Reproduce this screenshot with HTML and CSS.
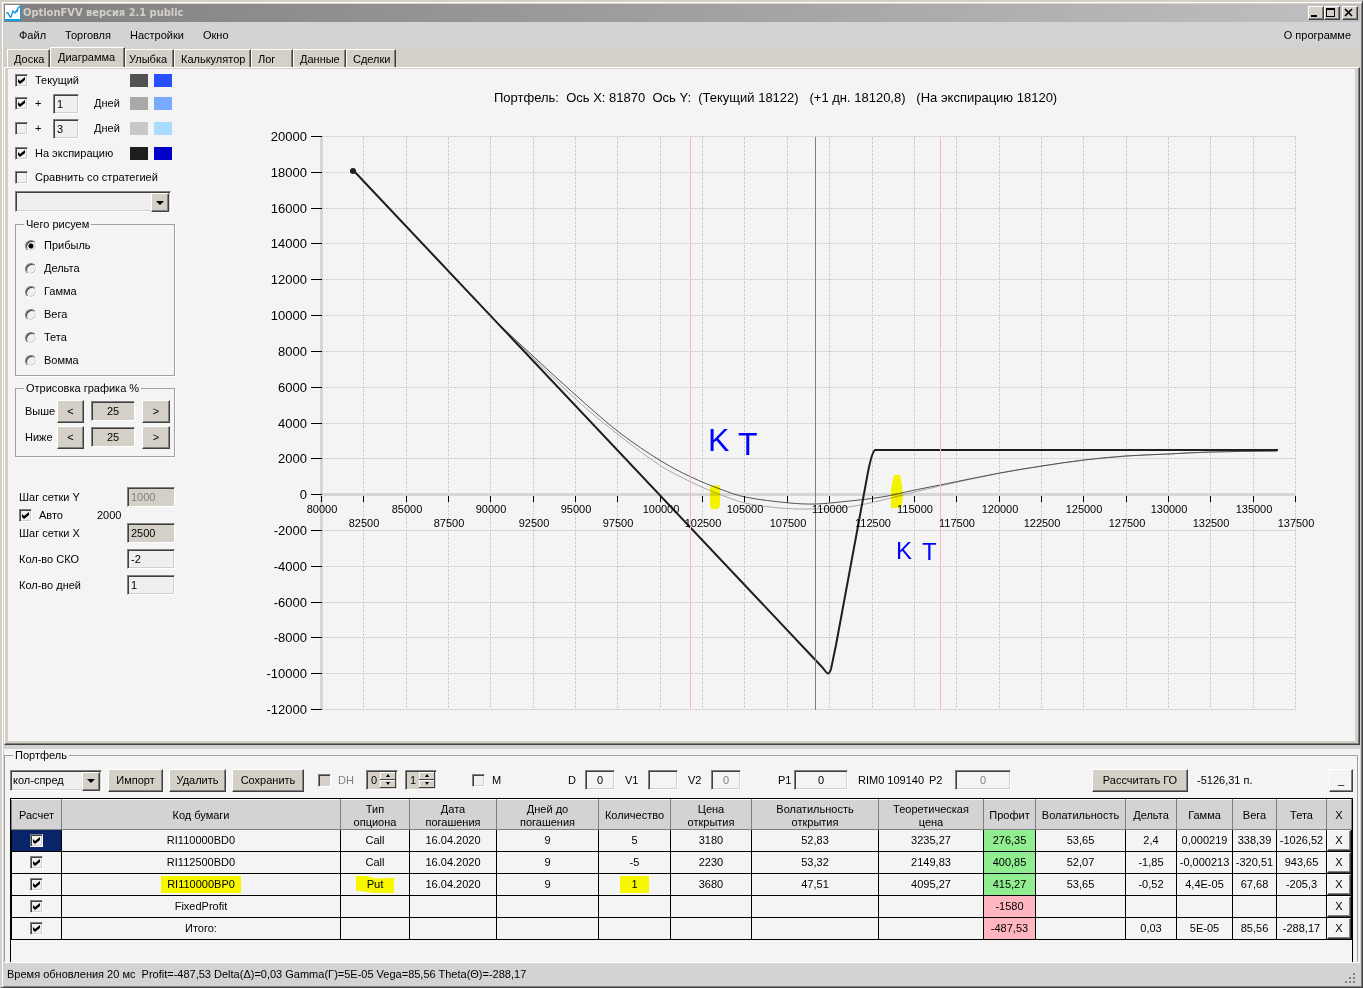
FILE: index.html
```html
<!DOCTYPE html>
<html lang="ru">
<head>
  <meta charset="UTF-8" />
  <title>OptionFVV версия 2.1 public</title>
  <link rel="stylesheet" href="styles.css">
</head>
<body>
  <div class="window">

    <header class="titlebar">
      <svg class="app-icon" width="16" height="16" viewBox="0 0 16 16">
        <rect width="16" height="16" fill="#0a9fe8"/>
        <rect x="0" y="0" width="15" height="14" fill="#fff"/>
        <path d="M1 8h2l2 4h1l2-6 2 2 2-3v2l1-4 2-2" fill="none" stroke="#1596dc" stroke-width="1.4"/>
      </svg>
      <h1>OptionFVV версия 2.1 public</h1>
      <div class="window-buttons">
        <button class="win-btn" aria-label="Свернуть"><svg width="12" height="10"><path d="M2 8h6" stroke="#000" stroke-width="2"/></svg></button>
        <button class="win-btn" aria-label="Развернуть"><svg width="12" height="10"><path d="M1 1h9M1.500 2v7M9.500 2v7M1 8.500h9" fill="none" stroke="#000"/><path d="M1 1h9" stroke="#000" stroke-width="2"/></svg></button>
        <button class="win-btn close" aria-label="Закрыть"><svg width="12" height="10"><path d="M2 1l7 7M9 1l-7 7" stroke="#000" stroke-width="1.700"/></svg></button>
      </div>
    </header>

    <nav class="menu">
      <a href="#">Файл</a>
      <a href="#">Торговля</a>
      <a href="#">Настройки</a>
      <a href="#">Окно</a>
      <a href="#" class="about">О программе</a>
    </nav>

    <div class="tabs">
      <button class="tab t-board">Доска</button>
      <button class="tab t-chart active">Диаграмма</button>
      <button class="tab t-smile">Улыбка</button>
      <button class="tab t-calc">Калькулятор</button>
      <button class="tab t-log">Лог</button>
      <button class="tab t-data">Данные</button>
      <button class="tab t-deals">Сделки</button>
    </div>

    <main class="pane">
      <aside class="options">
        <div class="line">
          <label class="check"><input type="checkbox" checked>Текущий</label>
          <i class="swatch dark"></i><i class="swatch blue"></i>
        </div>
        <div class="line days">
          <div class="check">
            <input type="checkbox" checked aria-label="Плюс 1 день"><span class="plus">+</span>
            <input class="field" type="text" value="1" id="days1"><label for="days1">Дней</label>
          </div>
          <i class="swatch gray"></i><i class="swatch sky"></i>
        </div>
        <div class="line days">
          <div class="check">
            <input type="checkbox" aria-label="Плюс 3 дня"><span class="plus">+</span>
            <input class="field" type="text" value="3" id="days3"><label for="days3">Дней</label>
          </div>
          <i class="swatch silver"></i><i class="swatch pale"></i>
        </div>
        <div class="line">
          <label class="check"><input type="checkbox" checked>На экспирацию</label>
          <i class="swatch black"></i><i class="swatch navy"></i>
        </div>
        <label class="check compare"><input type="checkbox">Сравнить со стратегией</label>
        <div class="combo strategy"><select aria-label="Стратегия"><option></option></select></div>

        <fieldset class="group draw">
          <legend>Чего рисуем</legend>
          <label><input type="radio" name="draw" checked>Прибыль</label>
          <label><input type="radio" name="draw">Дельта</label>
          <label><input type="radio" name="draw">Гамма</label>
          <label><input type="radio" name="draw">Вега</label>
          <label><input type="radio" name="draw">Тета</label>
          <label><input type="radio" name="draw">Вомма</label>
        </fieldset>

        <fieldset class="group range">
          <legend>Отрисовка графика %</legend>
          <div class="range-row">
            <label for="above">Выше</label>
            <button class="btn">&lt;</button>
            <input class="field face" type="text" id="above" value="25">
            <button class="btn">&gt;</button>
          </div>
          <div class="range-row">
            <label for="below">Ниже</label>
            <button class="btn">&lt;</button>
            <input class="field face" type="text" id="below" value="25">
            <button class="btn">&gt;</button>
          </div>
        </fieldset>

        <div class="grid-settings">
          <div class="setting"><label for="stepY">Шаг сетки Y</label><input class="field face" type="text" id="stepY" value="1000" disabled></div>
          <div class="auto"><label class="check"><input type="checkbox" checked>Авто</label><span>2000</span></div>
          <div class="setting"><label for="stepX">Шаг сетки X</label><input class="field face" type="text" id="stepX" value="2500"></div>
          <div class="setting spaced"><label for="sko">Кол-во СКО</label><input class="field" type="text" id="sko" value="-2"></div>
          <div class="setting spaced"><label for="dayCount">Кол-во дней</label><input class="field" type="text" id="dayCount" value="1"></div>
        </div>
      </aside>

      <svg class="chart" viewBox="188 69 1167 672">
        <text class="chart-title" x="494" y="102">Портфель:&#160; Ось X: 81870&#160; Ось Y:&#160; (Текущий 18122)&#160;&#160; (+1 дн. 18120,8)&#160;&#160; (На экспирацию 18120)</text>
        <g id="grid"></g>
        <g id="curves"></g>
        <g id="labels"></g>
        <g class="marker">
          <path d="M711 486l8-1 1 2v19l-2 3h-7l-1-3v-18z"/>
          <path d="M894 475h6l2 11 1 11-2 11h-10v-20z"/>
        </g>
        <g class="ink">
          <text class="ink-large" x="708" y="451">K</text>
          <text class="ink-large" x="738" y="455">T</text>
          <text x="896" y="559">K</text>
          <text x="922" y="560">T</text>
        </g>
      </svg>
    </main>

    <section class="portfolio">
      <fieldset class="portfolio-box">
        <legend>Портфель</legend>
        <div class="toolbar">
          <div class="combo"><select aria-label="Портфель"><option>кол-спред</option></select></div>
          <button class="btn import">Импорт</button>
          <button class="btn delete">Удалить</button>
          <button class="btn save">Сохранить</button>
          <label class="check off"><input type="checkbox" disabled>DH</label>
          <div class="spin"><input type="text" value="0" aria-label="DH 1"><svg width="16" height="16"><use href="#spin"/></svg></div>
          <div class="spin"><input type="text" value="1" aria-label="DH 2"><svg width="16" height="16"><use href="#spin"/></svg></div>
          <label class="check"><input type="checkbox">M</label>
          <div class="pair d"><label for="d">D</label><input class="field" type="text" id="d" value="0"></div>
          <div class="pair"><label for="v1">V1</label><input class="field" type="text" id="v1"></div>
          <div class="pair"><label for="v2">V2</label><input class="field" type="text" id="v2" value="0" disabled></div>
          <div class="pair p1"><label for="p1">P1</label><input class="field" type="text" id="p1" value="0"></div>
          <span>RIM0 109140</span>
          <div class="pair p2"><label for="p2">P2</label><input class="field" type="text" id="p2" value="0" disabled></div>
          <button class="btn calc">Рассчитать ГО</button>
          <span>-5126,31 п.</span>
          <button class="btn collapse">_</button>
        </div>

        <div class="table-wrap">
          <table>
            <colgroup>
              <col class="c-calc"><col><col class="c-type"><col class="c-date"><col class="c-days"><col class="c-qty">
              <col class="c-price"><col class="c-vol"><col class="c-theor"><col class="c-profit"><col class="c-iv">
              <col class="c-delta"><col class="c-gamma"><col class="c-vega"><col class="c-theta"><col class="c-x">
            </colgroup>
            <thead>
              <tr>
                <th>Расчет</th><th>Код бумаги</th><th>Тип<br>опциона</th><th>Дата<br>погашения</th><th>Дней до<br>погашения</th><th>Количество</th>
                <th>Цена<br>открытия</th><th>Волатильность<br>открытия</th><th>Теоретическая<br>цена</th><th>Профит</th><th>Волатильность</th>
                <th>Дельта</th><th>Гамма</th><th>Вега</th><th>Тета</th><th>X</th>
              </tr>
            </thead>
            <tbody>
              <tr>
                <td class="selected"><input type="checkbox" checked aria-label="Расчет"></td><td>RI110000BD0</td><td>Call</td><td>16.04.2020</td><td>9</td><td>5</td>
                <td>3180</td><td>52,83</td><td>3235,27</td><td class="plus-cell">276,35</td><td>53,65</td>
                <td>2,4</td><td>0,000219</td><td>338,39</td><td>-1026,52</td><td><button class="del">X</button></td>
              </tr>
              <tr>
                <td><input type="checkbox" checked aria-label="Расчет"></td><td>RI112500BD0</td><td>Call</td><td>16.04.2020</td><td>9</td><td>-5</td>
                <td>2230</td><td>53,32</td><td>2149,83</td><td class="plus-cell">400,85</td><td>52,07</td>
                <td>-1,85</td><td>-0,000213</td><td>-320,51</td><td>943,65</td><td><button class="del">X</button></td>
              </tr>
              <tr>
                <td><input type="checkbox" checked aria-label="Расчет"></td><td><mark class="code">RI110000BP0</mark></td><td><mark class="put">Put</mark></td><td>16.04.2020</td><td>9</td><td><mark>1</mark></td>
                <td>3680</td><td>47,51</td><td>4095,27</td><td class="plus-cell">415,27</td><td>53,65</td>
                <td>-0,52</td><td>4,4E-05</td><td>67,68</td><td>-205,3</td><td><button class="del">X</button></td>
              </tr>
              <tr>
                <td><input type="checkbox" checked aria-label="Расчет"></td><td>FixedProfit</td><td></td><td></td><td></td><td></td>
                <td></td><td></td><td></td><td class="minus-cell">-1580</td><td></td>
                <td></td><td></td><td></td><td></td><td><button class="del">X</button></td>
              </tr>
              <tr>
                <td><input type="checkbox" checked aria-label="Расчет"></td><td>Итого:</td><td></td><td></td><td></td><td></td>
                <td></td><td></td><td></td><td class="minus-cell">-487,53</td><td></td>
                <td>0,03</td><td>5E-05</td><td>85,56</td><td>-288,17</td><td><button class="del">X</button></td>
              </tr>
            </tbody>
          </table>
        </div>
      </fieldset>
    </section>

    <footer class="status">
      <span>Время обновления 20 мс&#160; Profit=-487,53 Delta(Δ)=0,03 Gamma(Γ)=5E-05 Vega=85,56 Theta(Θ)=-288,17</span>
      <svg class="grip" width="12" height="12" fill="#808080">
        <path d="M8 0h2v2h-2zM4 4h2v2h-2zM8 4h2v2h-2zM0 8h2v2h-2zM4 8h2v2h-2zM8 8h2v2h-2z"/>
      </svg>
    </footer>
  </div>

  <!-- up/down arrows shared by the numeric fields -->
  <svg width="0" height="0" class="defs">
    <symbol id="spin" viewBox="0 0 16 16">
      <path d="M0 0h16v16H0z" fill="#d4d0c8"/>
      <path d="M0 7.500h16M0 15.500h16M15.500 0v16" stroke="#404040"/>
      <path d="M0 .5h15M0 8.500h15M.5 0v7M.5 8v7" stroke="#fff"/>
      <path d="M8 2l2 3H6zM8 13l2-3H6z"/>
    </symbol>
  </svg>

  <script src="chart.js"></script>
</body>
</html>
```

FILE: styles.css
```css
/* Classic Windows theme */
* {
  box-sizing: border-box;
}
body {
  margin: 0;
  background-color: #d4d0c8;
  color: #000;
  font: 11px/13px "Liberation Sans", Arial, sans-serif;
}
button, input, select {
  font: inherit;
  color: inherit;
  margin: 0;
  border-radius: 0;
}
.defs {
  position: absolute;
}
.window {
  min-height: 100vh;
  display: flex;
  flex-direction: column;
  padding: 2px;
  border: 2px solid #d4d0c8;
  border-width: 2px 1px 1px 2px;
  box-shadow: inset 1px 1px #fff, inset -1px -1px #808080;
  border-right-color: #404040;
  border-bottom-color: #404040;
}

/* Title and menu */
.titlebar {
  display: flex;
  align-items: center;
  height: 18px;
  padding: 0 2px 0 1px;
  background: linear-gradient(90deg, #808080, #c0c0c0);
}
.titlebar h1 {
  flex: 1;
  margin: 0 0 0 2px;
  font: bold 11px/16px "DejaVu Sans Condensed", "DejaVu Sans", sans-serif;
  color: #d4d0c8;
}
.window-buttons {
  display: flex;
}
.win-btn {
  width: 16px;
  height: 14px;
  padding: 0;
  border: 1px solid;
  border-color: #fff #404040 #404040 #fff;
  box-shadow: inset -1px -1px #808080;
  background: #d4d0c8;
}
.win-btn.close {
  margin-left: 2px;
}
.win-btn svg {
  display: block;
}
.menu {
  display: flex;
  align-items: center;
  gap: 19px;
  height: 25px;
  padding: 1px 9px 0 15px;
  background: #d3d3d3;
}
.menu a {
  color: #000;
  text-decoration: none;
}
.menu .about {
  margin-left: auto;
}

/* Tabs */
.tabs {
  display: flex;
  align-items: flex-end;
  height: 20px;
  padding-left: 3px;
}
.tab {
  height: 18px;
  padding: 1px 0 0 6px;
  text-align: left;
  white-space: nowrap;
  background: #d4d0c8;
  border: 1px solid;
  border-color: #fff #404040 #d4d0c8 #fff;
  border-bottom: 0;
  box-shadow: inset -1px 0 #808080;
}
.tab.active {
  height: 20px;
  padding: 0 0 1px 7px;
}
.t-board { width: 43px; }
.t-chart { width: 75px; }
.t-smile { width: 49px; padding-left: 3px; }
.t-calc { width: 77px; }
.t-log { width: 42px; }
.t-data { width: 53px; }
.t-deals { width: 50px; }

.pane {
  display: flex;
  align-items: flex-start;
  background: #f4f4f4;
  border: solid #d4d0c8;
  border-width: 2px 5px 4px 4px;
  position: relative;
}
.pane::after {
  content: "";
  position: absolute;
  inset: -2px -5px -4px -4px;
  border: 1px solid;
  border-color: #fff #404040 #404040 #fff;
  box-shadow: inset -1px -1px #808080;
  pointer-events: none;
}

/* Controls */
input[type="checkbox"], input[type="radio"] {
  appearance: none;
  flex: none;
  width: 13px;
  height: 13px;
  border: 1px solid;
  border-color: #808080 #fff #fff #808080;
  box-shadow: inset 1px 1px #404040, inset -1px -1px #d4d0c8;
  background: #f0f0f0 center no-repeat;
}
input[type="checkbox"]:checked {
  background-image: url("data:image/svg+xml,%3Csvg xmlns='http://www.w3.org/2000/svg' width='7' height='7'%3E%3Cpath d='M0 2l2 2 5-4v3L2 7 0 5z'/%3E%3C/svg%3E");
}
input[type="checkbox"]:disabled {
  background-color: #d4d0c8;
}
input[type="radio"] {
  width: 12px;
  height: 12px;
  border-radius: 50%;
}
input[type="radio"]:checked {
  background-image: radial-gradient(circle, #000 2px, transparent 3px);
}
.check {
  display: flex;
  align-items: center;
  gap: 7px;
}
.field {
  height: 20px;
  padding: 0 3px;
  border: 1px solid;
  border-color: #808080 #fff #fff #808080;
  box-shadow: inset 1px 1px #404040, inset -1px -1px #d4d0c8;
  background: #efefef;
}
.field.face {
  background: #d4d0c8;
}
.field:disabled, .off {
  color: #808080;
}
.btn {
  height: 23px;
  padding: 0;
  background: #d4d0c8;
  border: 1px solid;
  border-color: #fff #404040 #404040 #fff;
  box-shadow: inset -1px -1px #808080;
}
.combo {
  position: relative;
  height: 21px;
}
.combo select {
  appearance: none;
  width: 100%;
  height: 100%;
  padding: 0 2px;
  border: 1px solid;
  border-color: #808080 #fff #fff #808080;
  box-shadow: inset 1px 1px #404040, inset -1px -1px #d4d0c8;
  background: #efefef;
}
.combo::after {
  content: "";
  position: absolute;
  top: 2px;
  right: 2px;
  width: 16px;
  height: 17px;
  border: 1px solid;
  border-color: #fff #404040 #404040 #fff;
  box-shadow: inset -1px -1px #808080;
  background: #d4d0c8 url("data:image/svg+xml,%3Csvg xmlns='http://www.w3.org/2000/svg' width='8' height='4'%3E%3Cpath d='M0 0h8L4 4z'/%3E%3C/svg%3E") center no-repeat;
  pointer-events: none;
}

/* Left column */
.options {
  flex: none;
  width: 180px;
  padding: 0 12px 0 7px;
}
.line {
  display: grid;
  grid-template-columns: 115px 24px 18px;
  align-items: center;
  height: 24px;
}
.line:first-child {
  height: 22px;
}
.line.days {
  height: 25px;
}
.days .field {
  width: 26px;
  margin-left: 4px;
}
.days label {
  margin-left: 8px;
}
.plus {
  width: 7px;
}
.swatch {
  width: 18px;
  height: 13px;
}
.dark { background: #525252; }
.blue { background: #2850ff; }
.gray { background: #a9a9a9; }
.sky { background: #78aaff; }
.silver { background: #c8c8c8; }
.pale { background: #aadcff; }
.black { background: #1e1e1e; }
.navy { background: #0000c8; }
.compare {
  height: 24px;
}
.strategy {
  width: 156px;
  margin-top: 2px;
}
.group {
  width: 160px;
  margin: 6px 0 0;
  padding: 0 0 0 9px;
  border: 1px solid #a0a0a0;
  box-shadow: 1px 1px #fff;
}
.group legend {
  padding: 0 2px;
  margin-left: -1px;
}
.draw {
  height: 158px;
}
.draw label {
  display: flex;
  align-items: center;
  gap: 7px;
  height: 23px;
}
.draw legend + label {
  margin-top: 3px;
}
.range {
  height: 75px;
}
.range-row {
  display: grid;
  grid-template-columns: 32px 27px 44px 28px;
  align-items: center;
  height: 26px;
}
.range-row:nth-of-type(1) {
  margin-top: 3px;
}
.range-row .field {
  margin-left: 7px;
  width: 44px;
  text-align: center;
}
.range-row .btn:last-child {
  margin-left: 14px;
  width: 28px;
}
.grid-settings {
  padding: 30px 0 0 4px;
}
.setting {
  display: flex;
  align-items: center;
  justify-content: space-between;
  width: 156px;
  height: 20px;
}
.setting .field {
  width: 48px;
}
.setting.spaced {
  margin-top: 6px;
}
.auto {
  display: flex;
  align-items: center;
  height: 16px;
}
.auto .check {
  width: 78px;
}

/* Chart */
.chart {
  flex: 1;
  min-width: 0;
  display: block;
}
.chart-title, .y-label {
  font-size: 13px;
}
.y-label {
  text-anchor: end;
}
.x-label {
  font-size: 11px;
  text-anchor: middle;
}
.grid-line {
  stroke: #d0d0d0;
  stroke-dasharray: 3 1;
  shape-rendering: crispEdges;
}
.tick {
  stroke: #000;
  shape-rendering: crispEdges;
}
.axis {
  stroke: #d6d6d6;
  stroke-width: 3;
  shape-rendering: crispEdges;
}
.sigma {
  stroke: #ffb6c1;
  shape-rendering: crispEdges;
}
.spot {
  stroke: #778088;
  shape-rendering: crispEdges;
}
.curve {
  fill: none;
  stroke: #525252;
}
.curve.next {
  stroke: #a9a9a9;
}
.curve.expiry {
  stroke: #1e1e1e;
  stroke-width: 2;
}
.marker {
  fill: #ffff00;
  mix-blend-mode: multiply;
}
.ink {
  fill: #0000ff;
  font-size: 24px;
}
.ink-large {
  font-size: 32px;
}

/* Portfolio */
.portfolio {
  flex: 1;
  display: flex;
  padding-right: 2px;
  background: #f4f4f4;
  border-top: 4px solid #d3d3d3;
}
.portfolio-box {
  flex: 1;
  min-width: 0;
  margin: 0;
  padding: 0 4px 0 5px;
  border: 1px solid #a0a0a0;
  border-bottom: 0;
}
.portfolio-box legend {
  margin-left: 3px;
  padding: 0 2px;
}
.toolbar {
  display: grid;
  grid-template-columns: 98px 61px 63px 86px 48px 39px 67px 96px 57px 63px 90px 80px 71px 163px 105px 1fr 24px;
  align-items: center;
  height: 36px;
}
.toolbar > * {
  white-space: nowrap;
}
.toolbar .combo {
  width: 92px;
}
.import { width: 55px; }
.delete { width: 57px; }
.save { width: 72px; }
.calc { width: 96px; }
.btn.collapse {
  background: #f4f4f4;
}
.spin {
  display: flex;
  align-items: center;
  width: 32px;
  height: 20px;
  padding: 2px 1px 2px 2px;
  background: #d4d0c8;
  border: 1px solid;
  border-color: #808080 #fff #fff #808080;
  box-shadow: inset 1px 1px #404040;
}
.spin input {
  width: 11px;
  padding: 0 0 0 2px;
  border: 0;
  background: none;
}
.pair {
  display: grid;
  grid-template-columns: 23px 30px;
  align-items: center;
}
.pair .field {
  width: 100%;
  text-align: center;
  background: #f4f4f4;
}
.pair.d { grid-template-columns: 17px 30px; }
.pair.p1 { grid-template-columns: 16px 54px; }
.pair.p2 { grid-template-columns: 26px 56px; }
.table-wrap {
  height: calc(100% - 36px);
  border: 1px solid #000;
  border-bottom: 0;
}
table {
  width: 100%;
  table-layout: fixed;
  border-collapse: collapse;
}
.c-calc { width: 50px; }
.c-type { width: 69px; }
.c-date { width: 87px; }
.c-days { width: 102px; }
.c-qty { width: 72px; }
.c-price { width: 81px; }
.c-vol { width: 127px; }
.c-theor { width: 105px; }
.c-profit { width: 52px; }
.c-iv { width: 90px; }
.c-delta { width: 51px; }
.c-gamma { width: 56px; }
.c-vega { width: 44px; }
.c-theta { width: 50px; }
.c-x { width: 25px; }
th, td {
  padding: 0;
  text-align: center;
  white-space: nowrap;
}
th {
  height: 30px;
  padding-top: 2px;
  font-weight: normal;
  background: #d3d3d3;
  border: 1px solid #808080;
  border-top-color: #fff;
}
td {
  height: 22px;
  border: 1px solid #000;
}
td input[type="checkbox"] {
  display: block;
  margin: 0 auto;
}
.selected {
  background: #0a246a;
}
.plus-cell { background: #90ee90; }
.minus-cell { background: #ffb6c1; }
mark {
  display: inline-block;
  padding: 2px 11px;
  color: #000;
  background: #f7f700;
}
mark.code {
  padding: 2px 6px;
}
mark.put {
  clip-path: polygon(0 0, 30% 0, 50% 15%, 100% 10%, 100% 100%, 50% 100%, 0 85%);
}
.del {
  display: block;
  width: 100%;
  height: 21px;
  padding: 0;
  background: #f4f4f4;
  border: 1px solid;
  border-color: #fff #404040 #404040 #fff;
  box-shadow: inset -1px -1px #808080;
}

.status {
  display: flex;
  align-items: center;
  justify-content: space-between;
  height: 23px;
  padding: 0 3px;
  background: #d3d3d3;
  border-top: 1px solid #fff;
}
.grip {
  align-self: flex-end;
}
```

FILE: chart.js
```js
const NS = 'http://www.w3.org/2000/svg';
const LEFT = 321, RIGHT = 1295, TOP = 136, BOTTOM = 709;
const X_MIN = 80000, X_MAX = 137500, Y_MIN = -12000, Y_MAX = 20000;

const grid = document.getElementById('grid');
const curves = document.getElementById('curves');
const labels = document.getElementById('labels');

function px(value) {
  return Math.round(LEFT + (value - X_MIN) / (X_MAX - X_MIN) * (RIGHT - LEFT));
}

function py(value) {
  return Math.round(BOTTOM - (value - Y_MIN) / (Y_MAX - Y_MIN) * (BOTTOM - TOP));
}

function add(parent, tag, attrs, text) {
  const el = document.createElementNS(NS, tag);
  for (const key in attrs) el.setAttribute(key, attrs[key]);
  if (text !== undefined) el.textContent = text;
  parent.appendChild(el);
}

function line(parent, cls, x1, y1, x2, y2) {
  add(parent, 'line', { class: cls, x1: x1 + 0.5, y1: y1 + 0.5, x2: x2 + 0.5, y2: y2 + 0.5 });
}

// Smooth path through the points
function smooth(points) {
  let d = `M${points[0]}`;
  for (let i = 0; i < points.length - 1; i++) {
    const a = points[i - 1] || points[i], b = points[i], c = points[i + 1], e = points[i + 2] || c;
    const k = (c[0] - b[0]) / 3;
    const m1 = (c[1] - a[1]) / (c[0] - a[0]), m2 = (e[1] - b[1]) / (e[0] - b[0]);
    d += `C${b[0] + k},${b[1] + m1 * k} ${c[0] - k},${c[1] - m2 * k} ${c}`;
  }
  return d;
}

for (let v = Y_MIN; v <= Y_MAX; v += 2000) {
  if (v !== 0) line(grid, 'grid-line', LEFT, py(v), RIGHT, py(v));
  line(labels, 'tick', 310, py(v), LEFT, py(v));
  add(labels, 'text', { class: 'y-label', x: 307, y: py(v) + 5 }, v);
}
for (let v = X_MIN; v <= X_MAX; v += 2500) {
  const x = px(v);
  const odd = (v - X_MIN) / 2500 % 2;
  line(grid, 'grid-line', x, TOP, x, BOTTOM);
  line(labels, 'tick', x, 495, x, 501);
  add(labels, 'text', { class: 'x-label', x: x + 1, y: odd ? 527 : 513 }, v);
}
line(grid, 'axis', LEFT, TOP, LEFT, BOTTOM);
line(grid, 'axis', LEFT, py(0), RIGHT, py(0));

const tail = [[1000, 473], [1042, 466], [1084, 460], [1126, 456], [1168, 454], [1210, 452], [1277, 451]];
const next = [[353, 170], [490, 315], [534, 359], [580, 403], [620, 436], [661, 466], [691, 482], [711, 491],
  [745, 503], [780, 508], [805, 509], [840, 508], [870, 503], [915, 492], [940, 486], ...tail];
const current = [[353, 170], [490, 315], [534, 357], [580, 399], [620, 433], [661, 461], [691, 477], [720, 489],
  [745, 497], [790, 503], [815, 504], [840, 502], [882, 497], [915, 490], [940, 485], ...tail];

add(curves, 'path', { class: 'curve next', d: smooth(next) });
add(curves, 'path', { class: 'curve', d: smooth(current) });
add(curves, 'path', { class: 'curve expiry', d: 'M353 170L822 667L826 672Q829 676 831 669L836 645L868 472Q872 452 875 450H1278' });
add(curves, 'circle', { cx: 353, cy: 171, r: 3, fill: '#1e1e1e' });
line(curves, 'sigma', 690, TOP, 690, BOTTOM);
line(curves, 'sigma', 940, TOP, 940, BOTTOM);
line(curves, 'spot', 815, TOP, 815, BOTTOM);
```
